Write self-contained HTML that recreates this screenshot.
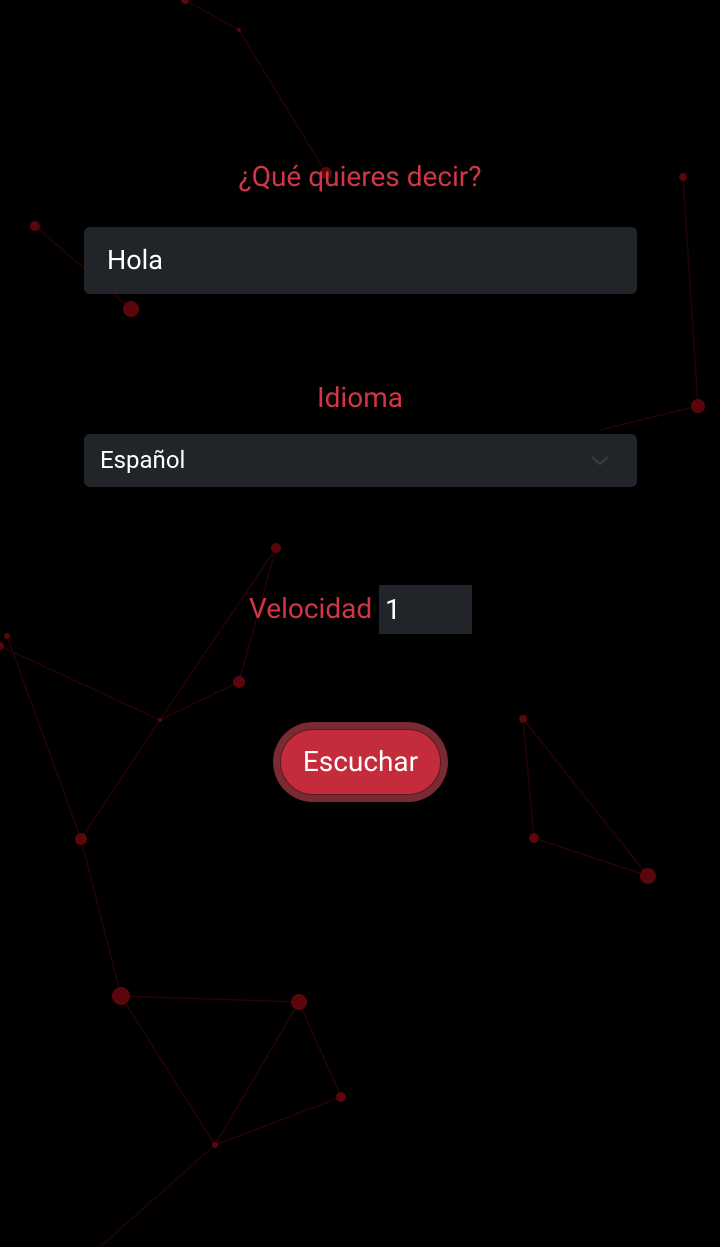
<!DOCTYPE html>
<html><head><meta charset="utf-8"><style>
body{margin:0;width:720px;height:1247px;background:#000;overflow:hidden;position:relative;font-family:"Roboto","Liberation Sans",sans-serif}
svg{position:absolute;left:0;top:0}
.lbl{position:absolute;left:0;width:720px;text-align:center;color:#d23645;font-size:28px}
.box{position:absolute;background:#212429;border-radius:6px;color:#fff}
</style></head><body>
<svg width="720" height="1247">
<g stroke="#260305" stroke-width="1.5" fill="none">
<path d="M185 0L239 30L326 173M35 226L131 309M683 177L698 406L600 430M276 548L239 682L160 720L81 839L121 996L299 1002L341 1097L215 1145L121 996M299 1002L215 1145M0 646L160 720M7 636L81 839M523 719L534 838L648 876L523 719M276 548L160 720M215 1145L100 1247"/>
</g>
<g fill="#5a060b">
<circle cx="185" cy="0" r="4"/><circle cx="239" cy="30" r="2"/><circle cx="326" cy="173" r="6"/><circle cx="35" cy="226" r="5"/><circle cx="131" cy="309" r="8"/><circle cx="683" cy="177" r="4"/><circle cx="698" cy="406" r="7"/><circle cx="276" cy="548" r="5"/><circle cx="7" cy="636" r="3"/><circle cx="0" cy="646" r="4"/><circle cx="239" cy="682" r="6"/><circle cx="160" cy="720" r="2"/><circle cx="81" cy="839" r="6"/><circle cx="121" cy="996" r="9"/><circle cx="299" cy="1002" r="8"/><circle cx="341" cy="1097" r="5"/><circle cx="215" cy="1145" r="3"/><circle cx="523" cy="719" r="4"/><circle cx="534" cy="838" r="5"/><circle cx="648" cy="876" r="8"/>
</g></svg>
<div class="lbl" style="top:160px">¿Qué quieres decir?</div>
<div class="box" style="left:84px;top:227px;width:553px;height:67px;font-size:27px;line-height:66px;padding-left:23px;box-sizing:border-box">Hola</div>
<div class="lbl" style="top:381px">Idioma</div>
<div class="box" style="left:84px;top:434px;width:553px;height:53px;font-size:24px;line-height:53px;padding-left:16px;box-sizing:border-box">Español
<svg width="20" height="12" style="position:absolute;left:506px;top:21px" viewBox="0 0 20 12"><path d="M2 2L10 9L18 2" stroke="#3a3e44" stroke-width="2" fill="none"/></svg></div>
<div style="position:absolute;left:249px;top:592px;color:#d23645;font-size:28px">Velocidad</div>
<div class="box" style="left:379px;top:585px;width:93px;height:49px;border-radius:0;font-size:28px;line-height:49px;padding-left:6px;box-sizing:border-box">1</div>
<div style="position:absolute;left:273px;top:722px;width:175px;height:80px;border-radius:40px;background:#7a2a33"></div>
<div style="position:absolute;left:280px;top:729px;width:161px;height:66px;border-radius:33px;background:#c42b3b;border:1px solid #5a1a20;box-sizing:border-box;color:#fff;font-size:28px;text-align:center;line-height:63px">Escuchar</div>
</body></html>
